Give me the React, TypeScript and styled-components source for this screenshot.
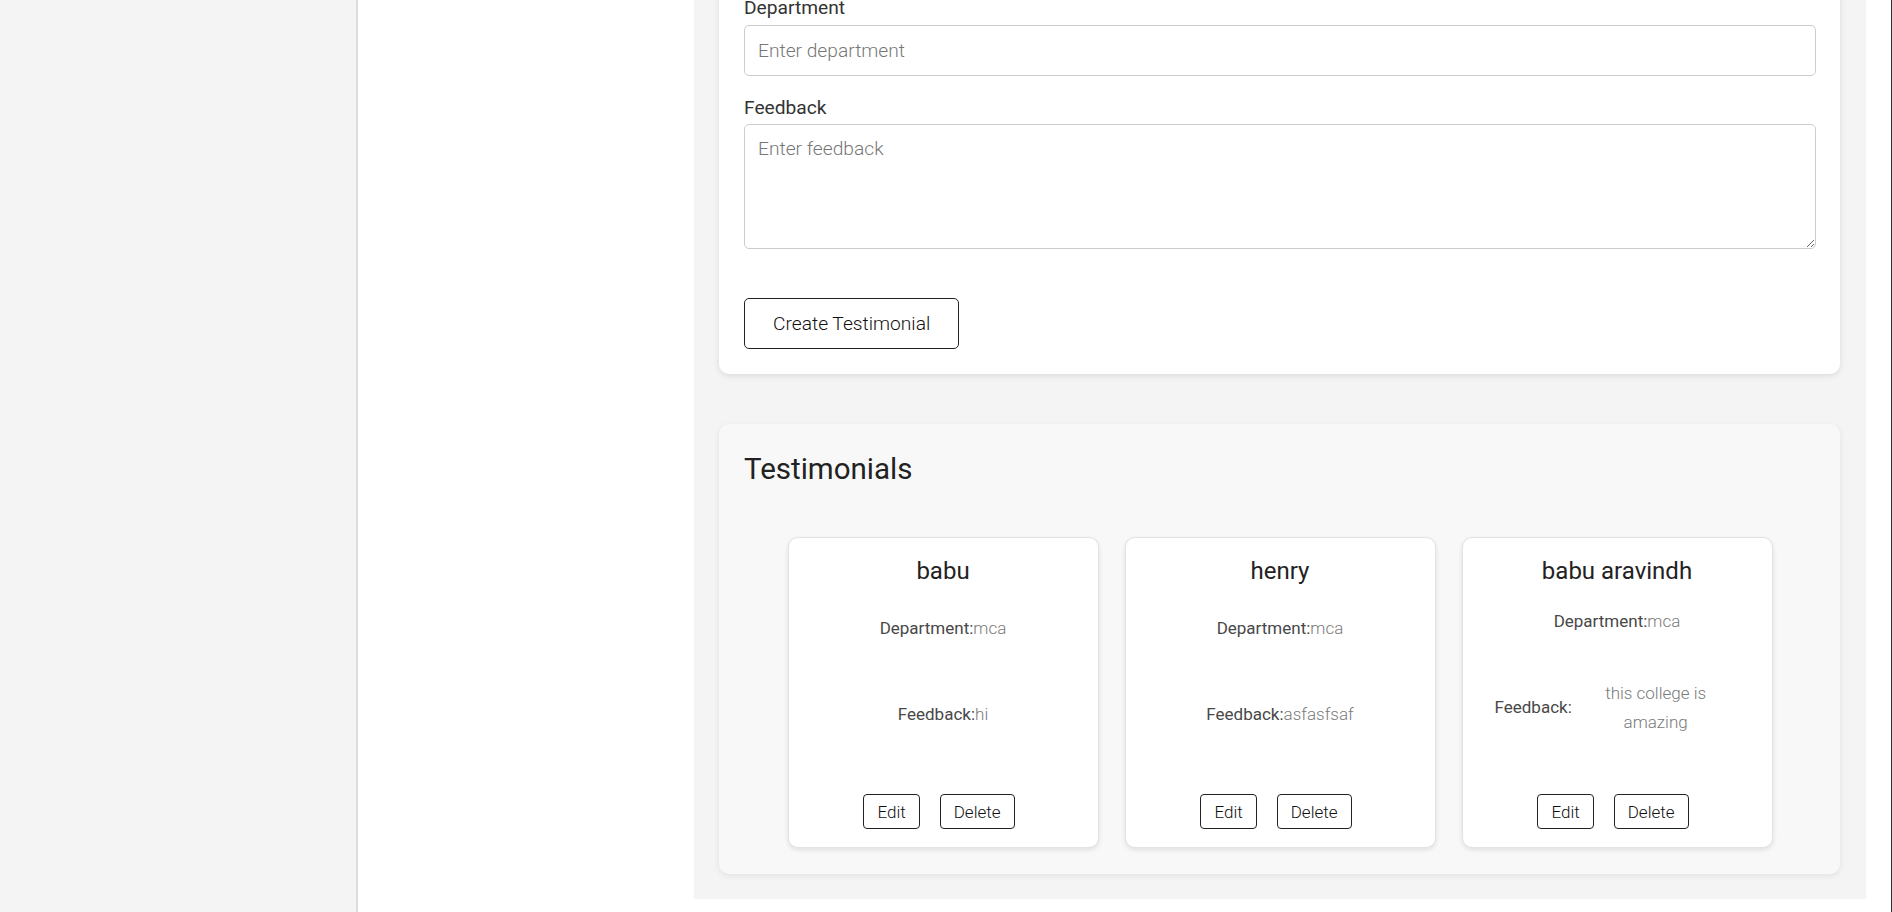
import React from "react"
import styled, { createGlobalStyle } from "styled-components"

interface Testimonial {
  id: number
  name: string
  department: string
  feedback: string
}

const testimonials: Testimonial[] = [
  { id: 1, name: "babu", department: "mca", feedback: "hi" },
  { id: 2, name: "henry", department: "mca", feedback: "asfasfsaf" },
  { id: 3, name: "babu aravindh", department: "mca", feedback: "this college is amazing" },
]

const GlobalStyle = createGlobalStyle`
  * {
    box-sizing: border-box;
  }
  html, body {
    margin: 0;
    padding: 0;
    height: 100%;
    overflow: hidden;
  }
  body {
    font-family: Roboto, "Liberation Sans", Arial, sans-serif;
    color: #222;
    background: #fff;
  }
`

const Shell = styled.div`
  display: flex;
  height: 100vh;
`

const Sidebar = styled.aside`
  width: 358px;
  flex-shrink: 0;
  background-color: #f4f4f4;
  border-right: 2px solid #dcdcdc;
`

const Content = styled.div`
  flex: 1;
  display: flex;
  flex-direction: column;
  background-color: #fff;
  padding: 0 25px 13px 336px;
  border-right: 1px solid #333;
`

const Main = styled.main`
  flex: 1;
  overflow: hidden;
  background-color: #f4f4f4;
  padding: 0 26px 25px 25px;
`

const FormCard = styled.form`
  margin-top: -28px;
  background-color: #fff;
  border-radius: 10px;
  box-shadow: 0 2px 6px rgba(0, 0, 0, 0.1);
  padding: 25px 24px 25px 25px;
`

const Field = styled.div`
  margin-bottom: 21px;
`

const Label = styled.label`
  display: block;
  font-size: 19.2px;
  line-height: 22.5px;
  color: #333;
  margin-bottom: 5px;
`

const Input = styled.input`
  display: block;
  width: 100%;
  height: 51px;
  padding: 0 13px;
  border: 1px solid #ccc;
  border-radius: 5px;
  font-family: Roboto, "Liberation Sans", Arial, sans-serif;
  font-size: 19.2px;
  font-weight: 300;
  color: #222;
  background: #fff;

  &::placeholder {
    color: #777;
  }
`

const TextArea = styled.textarea`
  display: block;
  width: 100%;
  height: 125px;
  padding: 13px 13px;
  border: 1px solid #ccc;
  border-radius: 5px;
  font-family: Roboto, "Liberation Sans", Arial, sans-serif;
  font-size: 19.2px;
  font-weight: 300;
  line-height: 22.5px;
  color: #222;
  background: #fff;

  &::placeholder {
    color: #777;
  }
`

const SubmitButton = styled.button`
  margin-top: 49px;
  height: 51px;
  padding: 0 28px;
  border: 1px solid #222;
  border-radius: 5px;
  background: #fff;
  font-family: Roboto, "Liberation Sans", Arial, sans-serif;
  font-size: 19.2px;
  font-weight: 300;
  color: #111;
  cursor: pointer;
`

const Section = styled.section`
  margin-top: 50px;
  background-color: #f8f8f8;
  border-radius: 10px;
  box-shadow: 0 2px 6px rgba(0, 0, 0, 0.08);
  padding: 28px 24px 26px 25px;
`

const Heading = styled.h2`
  margin: 0;
  font-size: 29.5px;
  font-weight: 400;
  line-height: normal;
  color: #222;
`

const CardRow = styled.div`
  display: flex;
  justify-content: center;
  gap: 26px;
  margin-top: 51px;
`

const Card = styled.div`
  width: 311px;
  height: 311px;
  display: flex;
  flex-direction: column;
  background-color: #fff;
  border: 1px solid #e3e3e3;
  border-radius: 10px;
  box-shadow: 0 2px 5px rgba(0, 0, 0, 0.1);
  padding: 19px 32px 18px;
`

const Name = styled.h3`
  margin: 0;
  font-size: 24px;
  font-weight: 400;
  line-height: normal;
  text-align: center;
  color: #222;
`

const CardBody = styled.div`
  flex: 1;
  display: flex;
  flex-direction: column;
  justify-content: space-around;
`

const InfoRow = styled.div`
  display: flex;
  justify-content: center;
  align-items: center;
  font-size: 17px;
  line-height: 29px;
`

const InfoLabel = styled.span`
  color: #484848;
  font-weight: 400;
  white-space: nowrap;
`

const InfoValue = styled.span`
  color: #7a7a7a;
  font-weight: 300;
  text-align: center;
`

const Actions = styled.div`
  display: flex;
  justify-content: center;
  gap: 12px;
  margin-top: 36px;
`

const SmallButton = styled.button`
  height: 35px;
  padding: 0 13px;
  margin-right: 8px;
  border: 1px solid #222;
  border-radius: 4px;
  background: #fff;
  font-family: Roboto, "Liberation Sans", Arial, sans-serif;
  font-size: 17px;
  font-weight: 300;
  color: #111;
  cursor: pointer;
`

const TestimonialCard: React.FC<{ item: Testimonial }> = ({ item }) => (
  <Card>
    <Name>{item.name}</Name>
    <CardBody>
      <InfoRow>
        <InfoLabel>Department:</InfoLabel>
        <InfoValue>{item.department}</InfoValue>
      </InfoRow>
      <InfoRow>
        <InfoLabel>Feedback:</InfoLabel>
        <InfoValue>{item.feedback}</InfoValue>
      </InfoRow>
    </CardBody>
    <Actions>
      <SmallButton type="button">Edit</SmallButton>
      <SmallButton type="button">Delete</SmallButton>
    </Actions>
  </Card>
)

const App: React.FC = () => {
  return (
    <>
      <GlobalStyle />
      <Shell>
        <Sidebar />
        <Content>
          <Main>
            <FormCard onSubmit={(e) => e.preventDefault()}>
              <Field>
                <Label htmlFor="department">Department</Label>
                <Input id="department" placeholder="Enter department" />
              </Field>
              <Label htmlFor="feedback">Feedback</Label>
              <TextArea id="feedback" placeholder="Enter feedback" />
              <SubmitButton type="submit">Create Testimonial</SubmitButton>
            </FormCard>

            <Section>
              <Heading>Testimonials</Heading>
              <CardRow>
                {testimonials.map((item) => (
                  <TestimonialCard key={item.id} item={item} />
                ))}
              </CardRow>
            </Section>
          </Main>
        </Content>
      </Shell>
    </>
  )
}

export default App
